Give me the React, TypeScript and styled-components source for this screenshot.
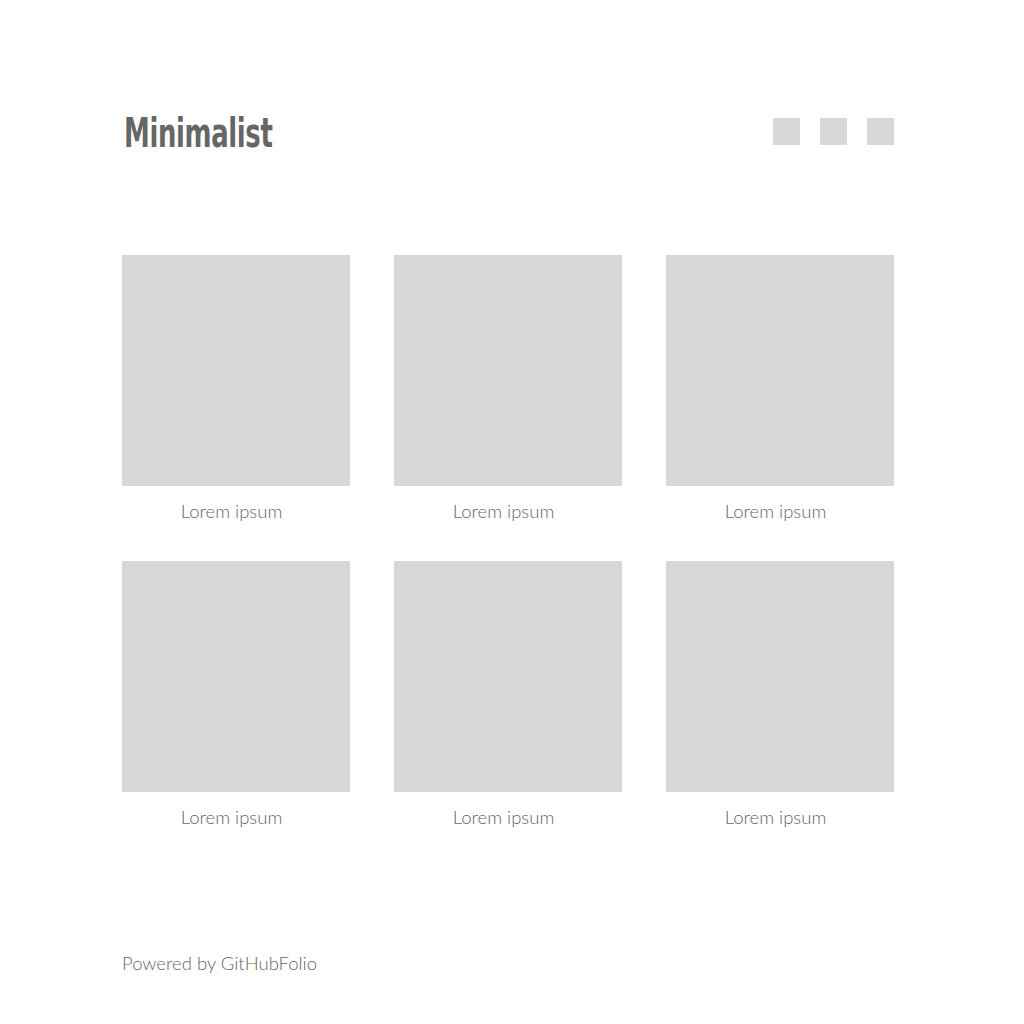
import React from "react";
import styled, {createGlobalStyle} from "styled-components";

const GlobalStyle = createGlobalStyle`
  html, body {
    margin: 0;
    padding: 0;
    background: #ffffff;
  }
  body {
    font-family: Lato, "Open Sans", "Liberation Sans", sans-serif;
  }
`

const Page = styled.div`
  width: 772px;
  padding: 103px 0 0 122px;
  display: flex;
  flex-direction: column;
`

const Header = styled.header`
  display: flex;
  justify-content: space-between;
  align-items: center;
  height: 56px;
`

// no condensed display face offline, so squeeze the condensed sans a bit
const Title = styled.h1`
  margin: 4px 0 0 2px;
  font-family: "DejaVu Sans Condensed", "Liberation Sans", sans-serif;
  font-weight: 700;
  font-size: 40px;
  color: #666666;
  letter-spacing: -0.5px;
  transform: scaleX(0.72);
  transform-origin: left center;
`

const Socials = styled.div`
  display: flex;
  gap: 20px;
`

const SocialIcon = styled.a`
  display: block;
  width: 27px;
  height: 27px;
  background: #d8d8d8;
`

const Grid = styled.main`
  margin-top: 96px;
  display: grid;
  grid-template-columns: repeat(3, 228px);
  column-gap: 44px;
`

const Card = styled.div`
  display: flex;
  flex-direction: column;
  height: 306px;
`

const Thumb = styled.div`
  height: 231px;
  background: #d8d8d8;
`

const Caption = styled.p`
  margin: 14px 9px 0 0;
  text-align: center;
  font-size: 18.5px;
  font-weight: 300;
  color: #666666;
`

const Footer = styled.footer`
  margin-top: 85px;
  font-size: 18.5px;
  font-weight: 300;
  color: #666666;
`

const projects = Array.from({length: 6}, (_, i) => ({id: i, name: 'Lorem ipsum'}))

export default function App() {
    return (
        <>
            <GlobalStyle/>
            <Page>
                <Header>
                    <Title>Minimalist</Title>
                    <Socials>
                        <SocialIcon/>
                        <SocialIcon/>
                        <SocialIcon/>
                    </Socials>
                </Header>
                <Grid>
                    {projects.map(p => (
                        <Card key={p.id}>
                            <Thumb/>
                            <Caption>{p.name}</Caption>
                        </Card>
                    ))}
                </Grid>
                <Footer>Powered by GitHubFolio</Footer>
            </Page>
        </>
    );
}
